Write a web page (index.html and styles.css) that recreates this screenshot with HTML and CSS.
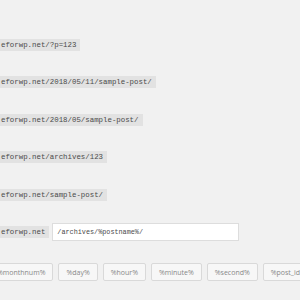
FILE: index.html
```html
<!DOCTYPE html>
<html lang="en">
<head>
    <meta charset="UTF-8">
    <meta name="viewport" content="width=device-width, initial-scale=1.0">
    <title>Permalink Settings</title>
    <link rel="stylesheet" href="styles.css">
</head>
<body>
    <div class="settings">
        <div class="option">
            <code>eforwp.net/?p=123</code>
        </div>
        <div class="option">
            <code>eforwp.net/2018/05/11/sample-post/</code>
        </div>
        <div class="option">
            <code>eforwp.net/2018/05/sample-post/</code>
        </div>
        <div class="option">
            <code>eforwp.net/archives/123</code>
        </div>
        <div class="option">
            <code>eforwp.net/sample-post/</code>
        </div>
        <div class="option">
            <code>eforwp.net</code>
            <input type="text" class="structure" value="/archives/%postname%/">
        </div>
    </div>

    <div class="tags">
        <button class="tag">%monthnum%</button>
        <button class="tag">%day%</button>
        <button class="tag">%hour%</button>
        <button class="tag">%minute%</button>
        <button class="tag">%second%</button>
        <button class="tag">%post_id%</button>
    </div>
</body>
</html>
```

FILE: styles.css
```css
body {
    margin: 0;
    background-color: #f1f1f1;
    font-family: "Open Sans", "Noto Sans", sans-serif;
    overflow: hidden;
}

.settings {
    display: flex;
    flex-direction: column;
    gap: 19.5px;
    padding-top: 35.5px;
}

.option {
    display: flex;
    align-items: center;
    gap: 3px;
    height: 18px;
}

.option code {
    font-family: "Liberation Mono", monospace;
    font-size: 7.4px;
    line-height: 12px;
    color: #4a4a4a;
    background-color: #e2e2e2;
    padding: 0 4px 0 1px;
}

.structure {
    width: 187px;
    height: 18px;
    box-sizing: border-box;
    margin: 0;
    padding: 0 4px;
    border: 1px solid #dddddd;
    background-color: #fff;
    font-family: "Liberation Mono", monospace;
    font-size: 6.8px;
    color: #4a4a4a;
    outline: none;
}

.tags {
    display: flex;
    gap: 5px;
    margin-top: 22px;
    margin-left: -11px;
    white-space: nowrap;
}

.tag {
    flex: none;
    height: 18px;
    margin: 0;
    padding: 0 7px;
    border: 1px solid #d9d9d9;
    border-radius: 2px;
    background-color: #f7f7f7;
    font-family: "Open Sans", sans-serif;
    font-size: 7px;
    color: #888;
}
```
